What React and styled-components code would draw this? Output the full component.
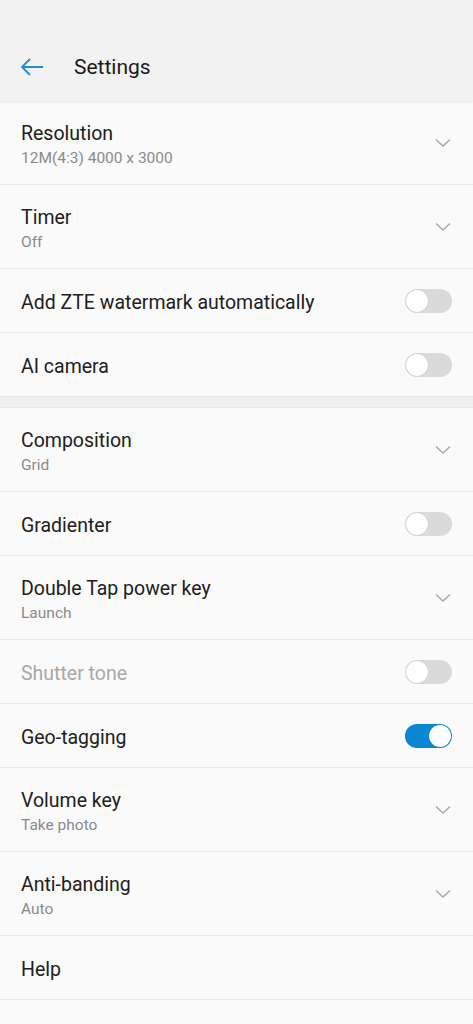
import React from 'react';
import styled, { createGlobalStyle } from 'styled-components';

const Global = createGlobalStyle`
  body {
    margin: 0;
    background: #fafafa;
    font-family: Roboto, "Noto Sans", sans-serif;
  }
`;

const Page = styled.div`
  width: 473px;
  height: 1024px;
  overflow: hidden;
  background: #fafafa;
`;

const Header = styled.header`
  height: 101px;
  background: #f2f2f2;
  display: flex;
  align-items: flex-end;
  padding: 0 0 22px 20px;
  box-sizing: border-box;
  box-shadow: 0 1px 3px rgba(0, 0, 0, 0.1);
  position: relative;
  z-index: 1;
`;

const Back = styled.div`
  width: 28px;
  height: 24px;
  display: flex;
  align-items: center;
  margin-right: 26px;
`;

const Title = styled.h1`
  margin: 0;
  font-size: 21px;
  font-weight: 400;
  color: #1a1a1a;
  line-height: 24px;
`;

const Row = styled.div`
  height: ${p => (p.$sub ? 83 : 63)}px;
  display: flex;
  align-items: center;
  justify-content: space-between;
  padding: 0 21px 0 21px;
  border-bottom: 1px solid #e6e6e6;
  box-sizing: content-box;
`;

const Texts = styled.div`
  display: flex;
  flex-direction: column;
  padding-top: 4px;
`;

const Label = styled.div`
  font-size: 19.5px;
  line-height: 26px;
  color: ${p => (p.$disabled ? '#a8a8a8' : '#202020')};
`;

const Sub = styled.div`
  font-size: 15.5px;
  line-height: 22px;
  color: #8a8a8a;
`;

const Gap = styled.div`
  height: 10px;
  background: #f0f0f0;
  border-bottom: 1px solid #e6e6e6;
`;

const Track = styled.div`
  width: 47px;
  height: 24px;
  border-radius: 12px;
  background: ${p => (p.$on ? '#0a87d2' : '#dadada')};
  position: relative;
  flex-shrink: 0;
`;

const Knob = styled.div`
  position: absolute;
  top: 1px;
  left: ${p => (p.$on ? 24 : 1)}px;
  width: 22px;
  height: 22px;
  border-radius: 50%;
  background: #fff;
  box-shadow: 0 0 1px rgba(0, 0, 0, 0.25);
`;

const Chevron = () => (
  <svg width="16" height="10" viewBox="0 0 16 10" style={{ marginRight: 1 }}>
    <path d="M1 1.5 L8 8 L15 1.5" fill="none" stroke="#a6a6a6" strokeWidth="1.4" />
  </svg>
);

const Toggle = ({ on }) => (
  <Track $on={on}>
    <Knob $on={on} />
  </Track>
);

const Item = ({ label, sub, kind, on, disabled }) => (
  <Row $sub={!!sub}>
    <Texts>
      <Label $disabled={disabled}>{label}</Label>
      {sub && <Sub>{sub}</Sub>}
    </Texts>
    {kind === 'select' && <Chevron />}
    {kind === 'toggle' && <Toggle on={on} />}
  </Row>
);

const first = [
  { label: 'Resolution', sub: '12M(4:3) 4000 x 3000', kind: 'select' },
  { label: 'Timer', sub: 'Off', kind: 'select' },
  { label: 'Add ZTE watermark automatically', kind: 'toggle' },
  { label: 'AI camera', kind: 'toggle' },
];

const second = [
  { label: 'Composition', sub: 'Grid', kind: 'select' },
  { label: 'Gradienter', kind: 'toggle' },
  { label: 'Double Tap power key', sub: 'Launch', kind: 'select' },
  { label: 'Shutter tone', kind: 'toggle', disabled: true },
  { label: 'Geo-tagging', kind: 'toggle', on: true },
  { label: 'Volume key', sub: 'Take photo', kind: 'select' },
  { label: 'Anti-banding', sub: 'Auto', kind: 'select' },
  { label: 'Help' },
  { label: 'Restore defaults' },
];

export default function App() {
  return (
    <Page>
      <Global />
      <Header>
        <Back>
          <svg width="24" height="20" viewBox="0 0 24 20">
            <path d="M23 10 H2 M10 2 L2 10 L10 18" fill="none" stroke="#1a8fd6" strokeWidth="1.8" />
          </svg>
        </Back>
        <Title>Settings</Title>
      </Header>
      {first.map(it => <Item key={it.label} {...it} />)}
      <Gap />
      {second.map(it => <Item key={it.label} {...it} />)}
    </Page>
  );
}
